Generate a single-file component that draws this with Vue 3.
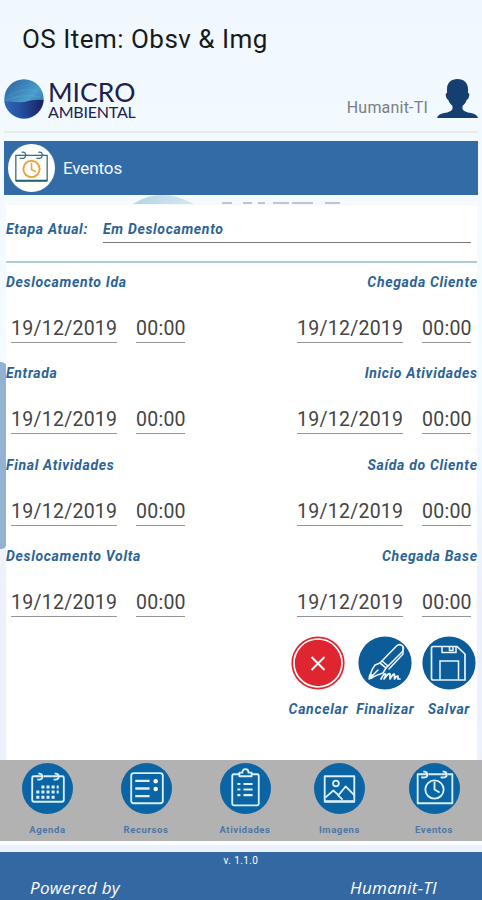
<script setup>
const rows = [
  ['Deslocamento Ida', 'Chegada Cliente'],
  ['Entrada', 'Inicio Atividades'],
  ['Final Atividades', 'Saída do Cliente'],
  ['Deslocamento Volta', 'Chegada Base'],
]
const tabs = ['Agenda', 'Recursos', 'Atividades', 'Imagens', 'Eventos']
</script>

<template>
  <div class="screen">
    <div class="edge-handle"></div>
    <h1 class="title">OS Item: Obsv &amp; Img</h1>

    <header class="brand">
      <svg class="globe" viewBox="0 0 40 40">
        <defs>
          <linearGradient id="top" x1="0" y1="0" x2="1" y2="1">
            <stop offset="0" stop-color="#2a5d9c" />
            <stop offset=".55" stop-color="#4a9fcd" />
            <stop offset="1" stop-color="#245a9a" />
          </linearGradient>
          <linearGradient id="bottom" x1="0" y1="0" x2="1" y2="0">
            <stop offset="0" stop-color="#3467b5" />
            <stop offset=".4" stop-color="#2352a0" />
            <stop offset="1" stop-color="#1c1f62" />
          </linearGradient>
        </defs>
        <circle cx="20" cy="20" r="19.7" fill="url(#top)" />
        <path d="M.4 22Q10 23.500 20 23Q31 20 39.600 21A19.700 19.700 0 0 1 .4 22Z" fill="url(#bottom)" />
        <path d="M5 17Q16 8 33 12M3 21Q17 14 36 18" stroke="#69b7da" stroke-width="1" fill="none" opacity=".3" />
      </svg>
      <div class="wordmark">
        <span class="micro">MICRO</span>
        <span class="ambiental">AMBIENTAL</span>
      </div>
      <span class="user">Humanit-TI</span>
      <svg class="avatar" viewBox="0 0 41 39">
        <path d="M20.500 0C27 0 31 4 31 10V14Q33 14 32 17.500Q31.500 20 30 20.500Q28.500 25 25.500 27V30Q27 33 34 34Q40 35 41 39H0Q1 35 7 34Q14 33 15.500 30V27Q12.500 25 11 20.500Q9.500 20 9 17.500Q8 14 10 14V10C10 4 14 0 20.500 0Z" fill="#153f70" />
      </svg>
    </header>

    <section class="banner">
      <div class="banner-icon">
        <svg viewBox="0 0 48 48" fill="none">
          <path d="M13 11H8V37H40V11H35M19 11H29" stroke="#356b7b" stroke-width="1.300" />
          <path d="M8 37H40" stroke="#27606c" stroke-width="2" />
          <path d="M12 14q6 1 6-3t-4-3M29 14q6 1 6-3t-4-3M11 11h9M28 11h9" stroke="#356b8b" stroke-width="1.300" />
          <circle cx="24" cy="25" r="8.300" stroke="#e9a43c" stroke-width="2" />
          <path d="M24 19V25.500L28.500 28" stroke="#e9a43c" stroke-width="1.600" />
        </svg>
      </div>
      <span>Eventos</span>
    </section>

    <div class="peek">
      <svg viewBox="0 0 482 10">
        <defs>
          <linearGradient id="arc"><stop offset="0" stop-color="#b4d5e6" /><stop offset="1" stop-color="#d7e6f1" /></linearGradient>
        </defs>
        <path d="M133 9Q161 -9 194 9Z" fill="url(#arc)" />
        <path d="M222 8h10M243 8h9M258 8h7M273 8h16M292 8h21M325 8h15" stroke="#bfc4d4" stroke-width="2" />
      </svg>
    </div>

    <main class="card">
      <div class="stage">
        <span class="label stage-name">Etapa Atual:</span>
        <span class="label stage-value">Em Deslocamento</span>
      </div>
      <div class="events">
        <div v-for="row in rows" :key="row[0]" class="row">
          <div v-for="name in row" :key="name" class="event">
            <span class="label">{{ name }}</span>
            <div class="fields">
              <span class="field date">19/12/2019</span>
              <span class="field time">00:00</span>
            </div>
          </div>
        </div>
      </div>
      <div class="actions">
        <button class="action cancel">
          <svg viewBox="0 0 54 54" fill="none">
            <circle cx="27" cy="27" r="26.600" fill="#df2630" />
            <circle cx="27" cy="27" r="24" stroke="#fff" stroke-width="1.700" />
            <path d="M20.500 21L33.500 34M33.500 21L20.500 34" stroke="#fff" stroke-width="2" />
          </svg>
          <span class="label">Cancelar</span>
        </button>
        <button class="action finish">
          <svg viewBox="0 0 54 54" fill="none" stroke="#f2f8fc" stroke-width="1.500" stroke-linejoin="round" stroke-linecap="round">
            <circle cx="27" cy="27" r="26.600" fill="#0d5c9a" stroke="none" />
            <path d="M22 27L39 9.500Q42 7.500 44.500 10Q46.500 12.500 44.500 15.500L28 32Z" />
            <path d="M22 27L28 32L25 37Q20 38.500 14 41.500L11 43L12.500 38Q14 33 17 29ZM12 42L20 34" />
            <path d="M45 11V18L31 33M24 25L30 30" />
            <path d="M23 43Q26 37 27.500 38Q28 39 26 43Q31 36 32 38V43Q36 36 36.500 39V43Q38 40 40 40V43H42" stroke-width="1.700" />
            <circle cx="13" cy="40.500" r="2.400" fill="#f2f8fc" stroke="none" />
          </svg>
          <span class="label">Finalizar</span>
        </button>
        <button class="action save">
          <svg viewBox="0 0 54 54" fill="none" stroke="#e8f5fa" stroke-width="1.700">
            <circle cx="27" cy="27" r="26.600" fill="#0d5c9a" stroke="none" />
            <path d="M11 10.500H35L43 18V44H11Q9.500 44 9.500 42V12Q9.500 10.500 11 10.500Z" />
            <path d="M18 44V25H36.500V44M20 11V16.500H34V11M27.500 11V14.500H31V11" stroke-width="1.500" />
          </svg>
          <span class="label">Salvar</span>
        </button>
      </div>
    </main>

    <nav class="tabs">
      <div v-for="(tab, i) in tabs" :key="tab" class="tab">
        <svg viewBox="0 0 50 50" fill="none" stroke="#d9f0fa" stroke-width="1.800" stroke-linejoin="round">
          <circle cx="25" cy="25" r="25" fill="#0b64a3" stroke="none" />
          <g v-if="i === 0">
            <path d="M15 13H11.500Q10 13 10 14.500V36Q10 38 12 38H39Q41 38 41 36V14.500Q41 13 39.500 13H36M21 13H30" />
            <path d="M15 16q5 1 5-2.500t-4-3M31 16q5 1 5-2.500t-4-3M14 13h6M30 13h6" />
            <path d="M19 23.500H36M14 28.500H36M14 33.500H32" stroke-width="3" stroke-dasharray="3 2" />
          </g>
          <g v-else-if="i === 1">
            <rect x="10" y="10" width="31" height="29.500" rx="2.500" />
            <path d="M14 17.500H28M14 25H28M14 32.500H28" stroke-width="2.300" />
            <circle cx="34" cy="18" r="2.200" fill="#fff" stroke="none" /><circle cx="34" cy="25.500" r="2.200" fill="#fff" stroke="none" />
          </g>
          <g v-else-if="i === 2">
            <path d="M19 11H13.500Q12 11 12 12.500V40Q12 41.500 13.500 41.500H36.500Q38 41.500 38 40V12.500Q38 11 36.500 11H31" />
            <path d="M19 13V9.500H22Q22 6 25 6T28 9.500H31V13Z" />
            <path d="M23 20.500H32M23 26H32M23 31.500H32M17 20.500h3M17 26h3M17 31.500h3" stroke-width="2" />
          </g>
          <g v-else-if="i === 3">
            <rect x="10.500" y="13" width="29" height="25" />
            <circle cx="21.500" cy="20" r="2.800" />
            <path d="M11 34L19 27L24 31.500L31 23L40 32M23 31L28 36M11 37.500H39" />
          </g>
          <g v-else>
            <path d="M13 11H8.500V39.500H42.500V11H38M19 11H32" />
            <path d="M12 14q6 1 6-2.500t-4-3M31 14q6 1 6-2.500t-4-3M12 11h6M32 11h6" />
            <circle cx="25" cy="26" r="9" /><path d="M25 18.500V26L30 29" />
          </g>
        </svg>
        <span>{{ tab }}</span>
      </div>
    </nav>

    <footer class="footer">
      <div class="version">v. 1.1.0</div>
      <div class="credits"><span>Powered by</span><span class="company">Humanit-TI</span></div>
    </footer>
  </div>
</template>

<style>
body { margin: 0; }
</style>

<style scoped>
* { box-sizing: border-box; }
.screen {
  position: relative; width: 482px; height: 900px; overflow: hidden;
  display: flex; flex-direction: column;
  font-family: Roboto, sans-serif;
  background: linear-gradient(#f0f8fe 0, #f4faff 200px, #f2fcff 400px, #edf0fb 600px, #eaf2fd 900px);
}
.edge-handle { position: absolute; left: 0; top: 362px; width: 7px; height: 187px; background: #93b1d1; border-radius: 0 6px 6px 0; }
.title { margin: 0; height: 78px; padding: 23px 0 0 22px; font-size: 26px; line-height: 32px; font-weight: 400; color: #171a1d; letter-spacing: .48px; white-space: nowrap; }
.brand { height: 55px; margin: 0 4px; display: flex; align-items: flex-start; border-bottom: 2px solid #e6ebee; }
.globe { width: 40px; height: 40px; margin-top: 1px; }
.wordmark { display: flex; flex-direction: column; margin-left: 4px; width: 96px; color: #20204c; font-family: Lato, sans-serif; white-space: nowrap; }
.micro { margin-top: 2px; font-size: 26.5px; line-height: 25px; }
.ambiental { font-size: 16px; line-height: 14px; letter-spacing: -.2px; }
.user { margin: 20px 9px 0 auto; font-size: 16px; line-height: 20px; font-weight: 400; color: #7b7e82; letter-spacing: .2px; }
.avatar { width: 41px; height: 39px; margin-top: 1px; }
.banner { height: 54px; margin: 8px 4px 0; display: flex; align-items: center; gap: 8px; padding-left: 4px; background: #336ba6; color: #f3f8fe; font-size: 17px; letter-spacing: -.1px; }
.banner-icon { width: 47px; height: 48px; border-radius: 50%; background: #fff; }
.banner-icon svg { display: block; width: 47px; height: 48px; }
.peek { height: 10px; }
.peek svg { display: block; width: 482px; height: 10px; }
.card { position: relative; height: 555px; margin: 0 5px 0 6px; background: #fff; }
.label { font-size: 14px; line-height: 18px; font-weight: 700; font-style: italic; color: #2c6394; letter-spacing: .68px; margin-right: -.68px; white-space: nowrap; }
.stage { height: 58px; padding-top: 15px; display: flex; align-items: flex-start; border-bottom: 2px solid #acced1; }
.stage-name { width: 97px; margin-right: 0; }
.stage-value { width: 368px; height: 23px; border-bottom: 1px solid #777; }
.events { padding-top: 10px; }
.row { display: flex; justify-content: space-between; height: 91.3px; }
.event { display: flex; flex-direction: column; }
.event:last-child { align-items: flex-end; }
.fields { display: flex; gap: 19px; margin: 24px 0 0 5px; }
.event:last-child .fields { margin-right: 6px; }
.field { height: 28px; font-size: 19.5px; line-height: 28px; font-weight: 400; color: #444; border-bottom: 1px solid #949494; white-space: nowrap; text-align: center; letter-spacing: .25px; }
.date { width: 106px; }
.time { width: 49px; }
.actions { display: flex; justify-content: flex-end; gap: 2px; margin: -2px -1px 0 0; }
.action { border: 0; padding: 0; background: none; display: flex; flex-direction: column; align-items: center; gap: 10px; width: 64px; font-family: inherit; }
.cancel { width: 66px; }
.save { width: 59px; }
.action svg { width: 54px; height: 54px; }
.tabs { height: 85px; display: flex; padding: 3px 0 0; background: linear-gradient(#b2b2b2 81px, #fafcff 81px); }
.tab { width: 99px; display: flex; flex-direction: column; align-items: center; }
.tab:first-child { width: 95px; }
.tab:nth-child(2) { width: 102px; }
.tab:nth-child(3) { width: 96px; }
.tab:nth-child(4) { width: 93px; }
.tab:last-child { width: 96px; }
.tab svg { width: 51px; height: 51px; }
.tab span { margin-top: 10px; font-size: 9.5px; line-height: 12px; font-weight: 700; color: #4d76a6; letter-spacing: .6px; }
.footer { margin-top: 7px; height: 48px; background: #3468a2; color: #fff; }
.version { text-align: center; font-size: 10px; line-height: 17px; letter-spacing: .4px; }
.credits { display: flex; justify-content: space-between; padding: 8px 45px 0 30px; font-family: "Open Sans", sans-serif; font-style: italic; font-size: 17px; line-height: 22px; letter-spacing: .3px; }
</style>
